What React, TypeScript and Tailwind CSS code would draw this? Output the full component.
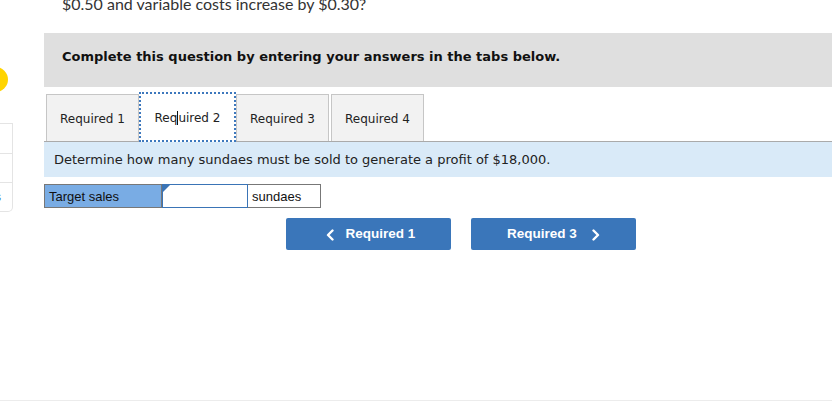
import React from 'react';

const verdana = { fontFamily: '"DejaVu Sans", Verdana, sans-serif' };

function Chevron({ dir }: { dir: 'left' | 'right' }) {
  return (
    <svg width="8" height="12" viewBox="0 0 8 12" fill="none">
      <polyline
        points={dir === 'left' ? '6.5,1.5 2,6 6.5,10.5' : '1.5,1.5 6,6 1.5,10.5'}
        stroke="white"
        strokeWidth="2.4"
        strokeLinecap="round"
        strokeLinejoin="round"
      />
    </svg>
  );
}

export default function App() {
  const tabs = ['Required 1', 'Required 2', 'Required 3', 'Required 4'];

  return (
    <div className="w-[832px] h-[405px] overflow-hidden bg-white flex flex-col">
      <div className="flex flex-1 min-h-0">
        {/* cut-off left rail */}
        <div className="w-[44px] shrink-0 flex flex-col">
          <div className="w-[25px] h-[25px] rounded-full bg-[#ffd400] ml-[-17px] mt-[67px]" />
          <div className="w-[13px] mt-[31px] border border-l-0 border-[#e4e4e4] rounded-br-[5px] flex flex-col">
            <div className="h-[30px] border-b border-[#e4e4e4]" />
            <div className="h-[29px] border-b border-[#e4e4e4]" />
            <div className="h-[28px] flex items-center overflow-hidden">
              <span className="ml-[-5px] text-[12px] leading-none text-[#3a76ba] font-['Liberation_Sans',sans-serif]">
                s
              </span>
            </div>
          </div>
        </div>

        {/* main column */}
        <div className="flex-1 min-w-0 flex flex-col">
          <div className="mt-[-6px] ml-[18px] text-[16px] leading-[20px] text-[#333] font-['Lato',sans-serif]">
            $0.50 and variable costs increase by $0.30?
          </div>

          <div className="mt-[19px] h-[54px] bg-[#dfdfdf] pl-[18px] pb-[7px] flex items-center">
            <span className="text-[13px] font-bold text-[#111]" style={verdana}>
              Complete this question by entering your answers in the tabs below.
            </span>
          </div>

          <div className="mt-[5px] h-[50px] flex items-end border-b border-[#aaa] pl-[2px]" style={verdana}>
            {tabs.map((t, i) =>
              i === 1 ? (
                <div
                  key={t}
                  className="w-[97px] h-[50px] bg-white border-2 border-dotted border-[#3d78bd] mb-[-1px] pt-[1px] flex items-center justify-center text-[12px] text-[#222]"
                >
                  <span>
                    Req<span className="border-l border-[#111]">u</span>ired 2
                  </span>
                </div>
              ) : (
                <div
                  key={t}
                  className={`w-[93px] h-[47px] bg-[#f2f2f2] border border-b-0 border-[#c6c6c6] pt-[1px] flex items-center justify-center text-[12px] text-[#222] ${
                    i === 3 ? 'ml-[2px]' : ''
                  }`}
                >
                  {t}
                </div>
              )
            )}
          </div>

          <div className="h-[35px] bg-[#d9eaf8] pl-[10px] pt-[1px] flex items-center text-[13px] text-[#222]" style={verdana}>
            Determine how many sundaes must be sold to generate a profit of $18,000.
          </div>

          <div className="mt-[7px] flex h-[24px] font-['Liberation_Sans',sans-serif] text-[13px] text-[#111]">
            <div className="w-[118px] bg-[#79ace4] border border-[#777] flex items-center pl-[4px] pt-[1px]">
              Target sales
            </div>
            <div className="relative w-[86px] bg-white border border-[#3a74b6]">
              <div className="absolute left-0 top-0 w-0 h-0 border-t-[7px] border-r-[7px] border-t-[#3a74b6] border-r-transparent" />
            </div>
            <div className="w-[73px] bg-white border border-l-0 border-[#777] flex items-center pl-[4px] pt-[1px]">
              sundaes
            </div>
          </div>

          <div className="mt-[10px] ml-[242px] flex gap-[20px] font-['Liberation_Sans',sans-serif] text-[13.5px] font-bold text-white">
            <button className="w-[165px] h-[32px] rounded-[2px] bg-[#3a76ba] flex items-center justify-center gap-[12px] pl-[4px] pt-[1px]">
              <Chevron dir="left" />
              <span>Required 1</span>
            </button>
            <button className="w-[165px] h-[32px] rounded-[2px] bg-[#3a76ba] flex items-center justify-center gap-[15px] pt-[1px]">
              <span>Required 3</span>
              <Chevron dir="right" />
            </button>
          </div>
        </div>
      </div>
      <div className="h-[5px] shrink-0 border-t border-[#ececec]" />
    </div>
  );
}
